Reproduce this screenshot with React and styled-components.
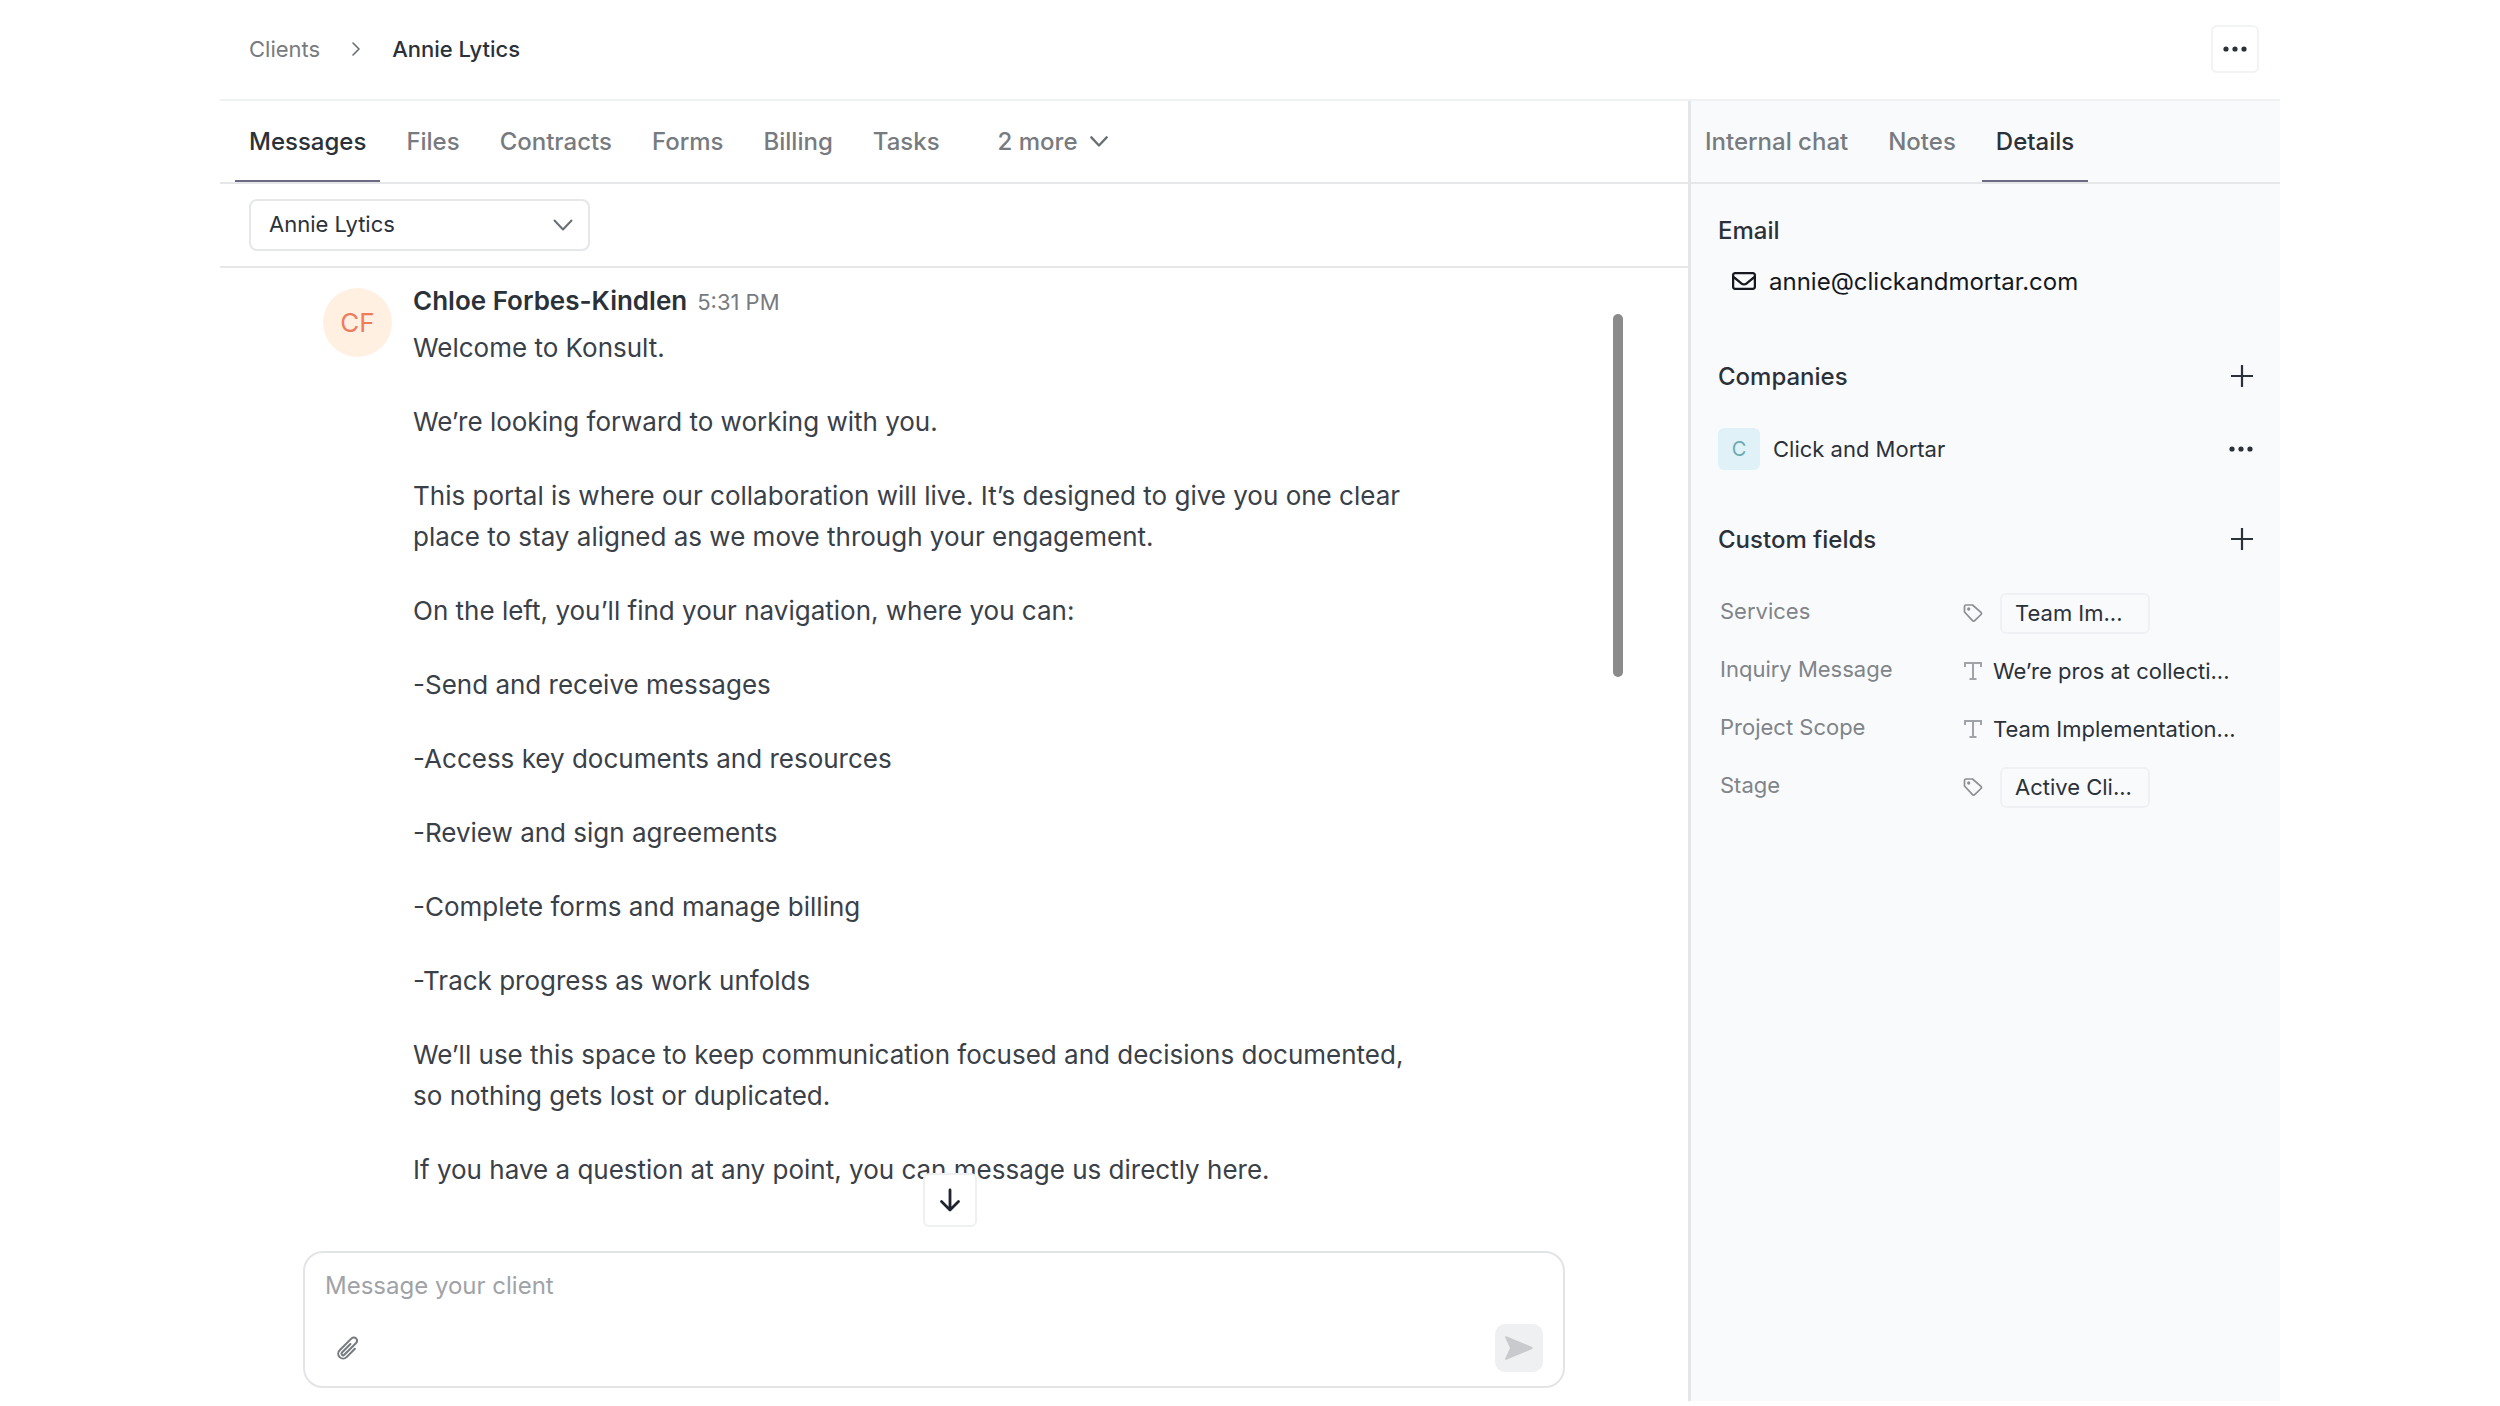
import React, { useState } from "react"
import styled, { createGlobalStyle } from "styled-components"
import { FaRegEnvelope } from "react-icons/fa6"

const GlobalStyle = createGlobalStyle`
  * {
    box-sizing: border-box;
  }
  body {
    margin: 0;
    background: #fff;
    color: #2b3139;
    font-family: Inter, "Liberation Sans", sans-serif;
    font-size: 22px;
  }
  button, select, textarea {
    font: inherit;
    color: inherit;
  }
  h2, p, dl, dd {
    margin: 0;
  }
  svg {
    display: block;
    flex: none;
  }
`

const Frame = styled.div`
  display: flex;
  flex-direction: column;
  height: calc(100vh - 5px);
  margin: 0 220px;
`

const Header = styled.header`
  display: flex;
  align-items: center;
  justify-content: space-between;
  height: 101px;
  padding: 0 21px 2px 29px;
  border-bottom: 2px solid #f0f1f3;
`

const Breadcrumb = styled.nav`
  display: flex;
  align-items: center;
  gap: 32px;
  color: #2b3139;
  font-weight: 500;
`

const CrumbLink = styled.a`
  color: #777b80;
  font-weight: 400;
  text-decoration: none;
`

const IconButton = styled.button`
  display: flex;
  align-items: center;
  justify-content: center;
  padding: 0;
  border: 0;
  background: none;
  cursor: pointer;
`

const MenuButton = styled(IconButton)`
  width: 48px;
  height: 48px;
  border: 2px solid #f2f3f4;
  border-radius: 6px;
`

const Body = styled.div`
  display: flex;
  flex: 1;
  min-height: 0;
`

const Main = styled.main`
  display: flex;
  flex: 1;
  flex-direction: column;
  min-width: 0;
`

const Sidebar = styled.aside`
  width: 592px;
  border-left: 3px solid #e4e7ea;
  background: #f9fafc;
`

const TabBar = styled.div`
  display: flex;
  gap: 12px;
  height: 83px;
  padding-left: ${(props) => (props.$narrow ? "0" : "15px")};
  border-bottom: 2px solid #e5e7e9;
`

const Tab = styled.button`
  display: flex;
  align-items: center;
  gap: 12px;
  height: 81px;
  padding: 2px 14px 0;
  border: 0;
  border-bottom: 2px solid ${(props) => (props.$active ? "#6e6a83" : "transparent")};
  background: none;
  color: ${(props) => (props.$active ? "#2b3139" : "#777b80")};
  font-size: 24px;
  font-weight: 500;
  white-space: nowrap;
  cursor: pointer;
`

const MoreTab = styled(Tab)`
  margin-left: 18px;
`

const Toolbar = styled.div`
  padding: 15px 29px;
  border-bottom: 2px solid #e5e7e9;
`

const SelectBox = styled.div`
  display: grid;
  align-items: center;
  width: 341px;

  > * {
    grid-area: 1 / 1;
  }
  > svg {
    justify-self: end;
    margin-right: 17px;
    pointer-events: none;
  }
`

const Select = styled.select`
  width: 100%;
  height: 52px;
  padding: 0 18px 2px;
  border: 2px solid #e5e7e9;
  border-radius: 8px;
  background: #fff;
  appearance: none;
`

const Thread = styled.div`
  position: relative;
  flex: 1;
  min-height: 0;
`

const Messages = styled.div`
  height: 100%;
  padding: 16px 123px 0 103px;
  overflow: hidden;
`

const Message = styled.article`
  display: flex;
  gap: 21px;
`

const Avatar = styled.div`
  display: flex;
  flex: none;
  align-items: center;
  justify-content: center;
  width: 69px;
  height: 69px;
  margin-top: 4px;
  border-radius: 50%;
  background: #fff0e2;
  color: #ee7c5b;
  font-size: 26px;
`

const Meta = styled.div`
  display: flex;
  align-items: baseline;
  gap: 10px;
  margin-bottom: 8px;
  font-size: 22px;
  line-height: 34px;
  color: #777b80;
`

const Author = styled.span`
  color: #2b3139;
  font-size: 26px;
  font-weight: 600;
`

const Text = styled.div`
  display: flex;
  flex-direction: column;
  gap: 33px;
  max-width: 1000px;
  color: #3a4048;
  font-size: 26px;
  line-height: 41px;
`

const ScrollThumb = styled.div`
  position: absolute;
  top: 46px;
  right: 65px;
  width: 10px;
  height: 363px;
  border-radius: 5px;
  background: #8b8b8b;
`

const ScrollDown = styled(IconButton)`
  position: absolute;
  bottom: 24px;
  left: 703px;
  width: 54px;
  height: 54px;
  border: 2px solid #eff0f2;
  border-radius: 6px;
  background: #fff;
`

const Composer = styled.form`
  display: flex;
  flex-direction: column;
  height: 137px;
  margin: 0 123px 13px 83px;
  padding: 16px 20px 14px 20px;
  border: 2px solid #e3e4e6;
  border-radius: 20px;
`

const ComposerInput = styled.textarea`
  flex: 1;
  min-height: 0;
  padding: 0;
  border: 0;
  outline: 0;
  background: none;
  font-size: 24px;
  line-height: 34px;
  resize: none;

  &::placeholder {
    color: #9fa3a7;
  }
`

const ComposerActions = styled.div`
  display: flex;
  align-items: center;
  justify-content: space-between;
  padding-left: 10px;
`

const SendButton = styled(IconButton)`
  width: 48px;
  height: 48px;
  border-radius: 10px;
  background: #eff0f2;
`

const Section = styled.section`
  padding: ${(props) => props.$top} 27px 0;
`

const SectionHead = styled.div`
  display: flex;
  align-items: center;
  justify-content: space-between;
  height: 32px;
`

const SectionTitle = styled.h2`
  font-size: 24px;
  font-weight: 500;
`

const EmailLink = styled.a`
  display: flex;
  align-items: center;
  gap: 13px;
  height: 32px;
  margin-top: 19px;
  padding-left: 14px;
  color: #15181c;
  font-size: 24px;
  text-decoration: none;
`

const Company = styled.div`
  display: flex;
  align-items: center;
  gap: 13px;
  margin-top: 36px;

  > button {
    margin-left: auto;
  }
`

const CompanyBadge = styled.span`
  display: flex;
  align-items: center;
  justify-content: center;
  width: 42px;
  height: 42px;
  border-radius: 6px;
  background: #e0f2f8;
  color: #6aaab2;
  font-size: 20px;
`

const Fields = styled.dl`
  margin-top: 29px;
  padding-left: 2px;
`

const Field = styled.div`
  display: grid;
  grid-template-columns: 243px 1fr;
  align-items: center;
  height: 58px;
`

const FieldName = styled.dt`
  padding-bottom: 4px;
  color: #808489;
`

const FieldValue = styled.dd`
  display: flex;
  align-items: center;
  gap: ${(props) => (props.$chip ? "17px" : "10px")};
  color: #2b3139;
  white-space: nowrap;
`

const Chip = styled.span`
  width: 150px;
  padding: 5px 13px 6px;
  border: 2px solid #f0f1f4;
  border-radius: 6px;
  line-height: 26px;
`

const Dots = () => (
  <svg width="24" height="6" viewBox="0 0 24 6" fill="#2b3139">
    <circle cx="3" cy="3" r="2.6" />
    <circle cx="12" cy="3" r="2.6" />
    <circle cx="21" cy="3" r="2.6" />
  </svg>
)

const ChevronRight = () => (
  <svg width="8" height="14" viewBox="0 0 8 14" fill="none" stroke="#6a6f75" strokeWidth="1.6" strokeLinecap="round" strokeLinejoin="round">
    <path d="M1 1l6 6-6 6" />
  </svg>
)

const ChevronDown = ({ width = 20, stroke = 2 }) => (
  <svg
    width={width}
    height={width * 0.6}
    viewBox="0 0 20 12"
    fill="none"
    stroke="#6a6f75"
    strokeWidth={stroke}
    strokeLinecap="round"
    strokeLinejoin="round"
  >
    <path d="M1.5 1.5L10 10.500l8.500-9" />
  </svg>
)

const Plus = () => (
  <svg width="22" height="22" viewBox="0 0 22 22" fill="none" stroke="#2b3139" strokeWidth="2.2">
    <path d="M11 0v22M0 11h22" />
  </svg>
)

const TagIcon = () => (
  <svg width="20" height="20" viewBox="0 0 20 20" fill="none" stroke="#8b8f94" strokeWidth="1.7" strokeLinejoin="round">
    <path d="M1.5 3.5v5.500l8 8.700a1.500 1.500 0 0 0 2.200 0l6.300-6.200a1.500 1.500 0 0 0 0-2.200L9.500 2H3A1.500 1.500 0 0 0 1.500 3.500z" />
    <circle cx="5.700" cy="6" r=".8" fill="#8b8f94" />
  </svg>
)

const TextIcon = () => (
  <svg width="20" height="20" viewBox="0 0 20 20" fill="none" stroke="#a0a4a8" strokeWidth="2">
    <path d="M2 6V2h16v4M10 2v16M6.500 18h7" />
  </svg>
)

const MAIN_TABS = ["Messages", "Files", "Contracts", "Forms", "Billing", "Tasks"]
const SIDE_TABS = ["Internal chat", "Notes", "Details"]

const PARAGRAPHS = [
  "Welcome to Konsult.",
  "We’re looking forward to working with you.",
  "This portal is where our collaboration will live. It’s designed to give you one clear place to stay aligned as we move through your engagement.",
  "On the left, you’ll find your navigation, where you can:",
  "-Send and receive messages",
  "-Access key documents and resources",
  "-Review and sign agreements",
  "-Complete forms and manage billing",
  "-Track progress as work unfolds",
  "We’ll use this space to keep communication focused and decisions documented, so nothing gets lost or duplicated.",
  "If you have a question at any point, you can message us directly here.",
]

const FIELDS = [
  { name: "Services", value: "Team Im...", chip: true },
  { name: "Inquiry Message", value: "We’re pros at collecti..." },
  { name: "Project Scope", value: "Team Implementation..." },
  { name: "Stage", value: "Active Cli...", chip: true },
]

const App = () => {
  const [tab, setTab] = useState("Messages")
  const [sideTab, setSideTab] = useState("Details")

  return (
    <Frame>
      <GlobalStyle />
      <Header>
        <Breadcrumb>
          <CrumbLink href="#clients">Clients</CrumbLink>
          <ChevronRight />
          <span>Annie Lytics</span>
        </Breadcrumb>
        <MenuButton aria-label="More actions">
          <Dots />
        </MenuButton>
      </Header>
      <Body>
        <Main>
          <TabBar>
            {MAIN_TABS.map((name) => (
              <Tab key={name} $active={name === tab} onClick={() => setTab(name)}>
                {name}
              </Tab>
            ))}
            <MoreTab>
              2 more
              <ChevronDown width={18} stroke={2.6} />
            </MoreTab>
          </TabBar>
          <Toolbar>
            <SelectBox>
              <Select aria-label="Client">
                <option>Annie Lytics</option>
              </Select>
              <ChevronDown />
            </SelectBox>
          </Toolbar>
          <Thread>
            <Messages>
              <Message>
                <Avatar>CF</Avatar>
                <div>
                  <Meta>
                    <Author>Chloe Forbes-Kindlen</Author>
                    <time>5:31 PM</time>
                  </Meta>
                  <Text>
                    {PARAGRAPHS.map((text) => (
                      <p key={text}>{text}</p>
                    ))}
                  </Text>
                </div>
              </Message>
            </Messages>
            <ScrollThumb />
            <ScrollDown aria-label="Scroll to latest">
              <svg width="22" height="24" viewBox="0 0 22 24" fill="none" stroke="#1f2430" strokeWidth="2.8" strokeLinecap="round" strokeLinejoin="round">
                <path d="M11 2v20M2.500 13.500L11 22l8.500-8.500" />
              </svg>
            </ScrollDown>
          </Thread>
          <Composer onSubmit={(e) => e.preventDefault()}>
            <ComposerInput aria-label="Message" placeholder="Message your client" />
            <ComposerActions>
              <IconButton type="button" aria-label="Attach file">
                <svg width="26" height="26" viewBox="0 0 24 24" fill="none" stroke="#777b80" strokeWidth="1.9" strokeLinecap="round" strokeLinejoin="round">
                  <path d="M18.375 12.739l-7.693 7.693a4.500 4.500 0 0 1-6.364-6.364l10.940-10.940A3 3 0 1 1 19.500 7.372L8.552 18.320m.009-.010l-.010.010m5.699-9.941l-7.810 7.810a1.500 1.500 0 0 0 2.112 2.130" />
                </svg>
              </IconButton>
              <SendButton type="submit" aria-label="Send">
                <svg width="28" height="24" viewBox="0 0 28 24" fill="#c8cacd">
                  <path d="M1.500.2L27 11a1.100 1.100 0 0 1 0 2L1.500 23.800A1 1 0 0 1 .2 22.400L5 12 .2 1.600A1 1 0 0 1 1.500.2z" />
                </svg>
              </SendButton>
            </ComposerActions>
          </Composer>
        </Main>
        <Sidebar>
          <TabBar $narrow>
            {SIDE_TABS.map((name) => (
              <Tab key={name} $active={name === sideTab} onClick={() => setSideTab(name)}>
                {name}
              </Tab>
            ))}
          </TabBar>
          <Section $top="30px">
            <SectionHead>
              <SectionTitle>Email</SectionTitle>
            </SectionHead>
            <EmailLink href="mailto:annie@clickandmortar.com">
              <FaRegEnvelope size={24} />
              annie@clickandmortar.com
            </EmailLink>
          </Section>
          <Section $top="63px">
            <SectionHead>
              <SectionTitle>Companies</SectionTitle>
              <IconButton aria-label="Add company">
                <Plus />
              </IconButton>
            </SectionHead>
            <Company>
              <CompanyBadge>C</CompanyBadge>
              Click and Mortar
              <IconButton aria-label="Company actions">
                <Dots />
              </IconButton>
            </Company>
          </Section>
          <Section $top="53px">
            <SectionHead>
              <SectionTitle>Custom fields</SectionTitle>
              <IconButton aria-label="Add custom field">
                <Plus />
              </IconButton>
            </SectionHead>
            <Fields>
              {FIELDS.map(({ name, value, chip }) => (
                <Field key={name}>
                  <FieldName>{name}</FieldName>
                  <FieldValue $chip={chip}>
                    {chip ? <TagIcon /> : <TextIcon />}
                    {chip ? <Chip>{value}</Chip> : value}
                  </FieldValue>
                </Field>
              ))}
            </Fields>
          </Section>
        </Sidebar>
      </Body>
    </Frame>
  )
}

export default App
